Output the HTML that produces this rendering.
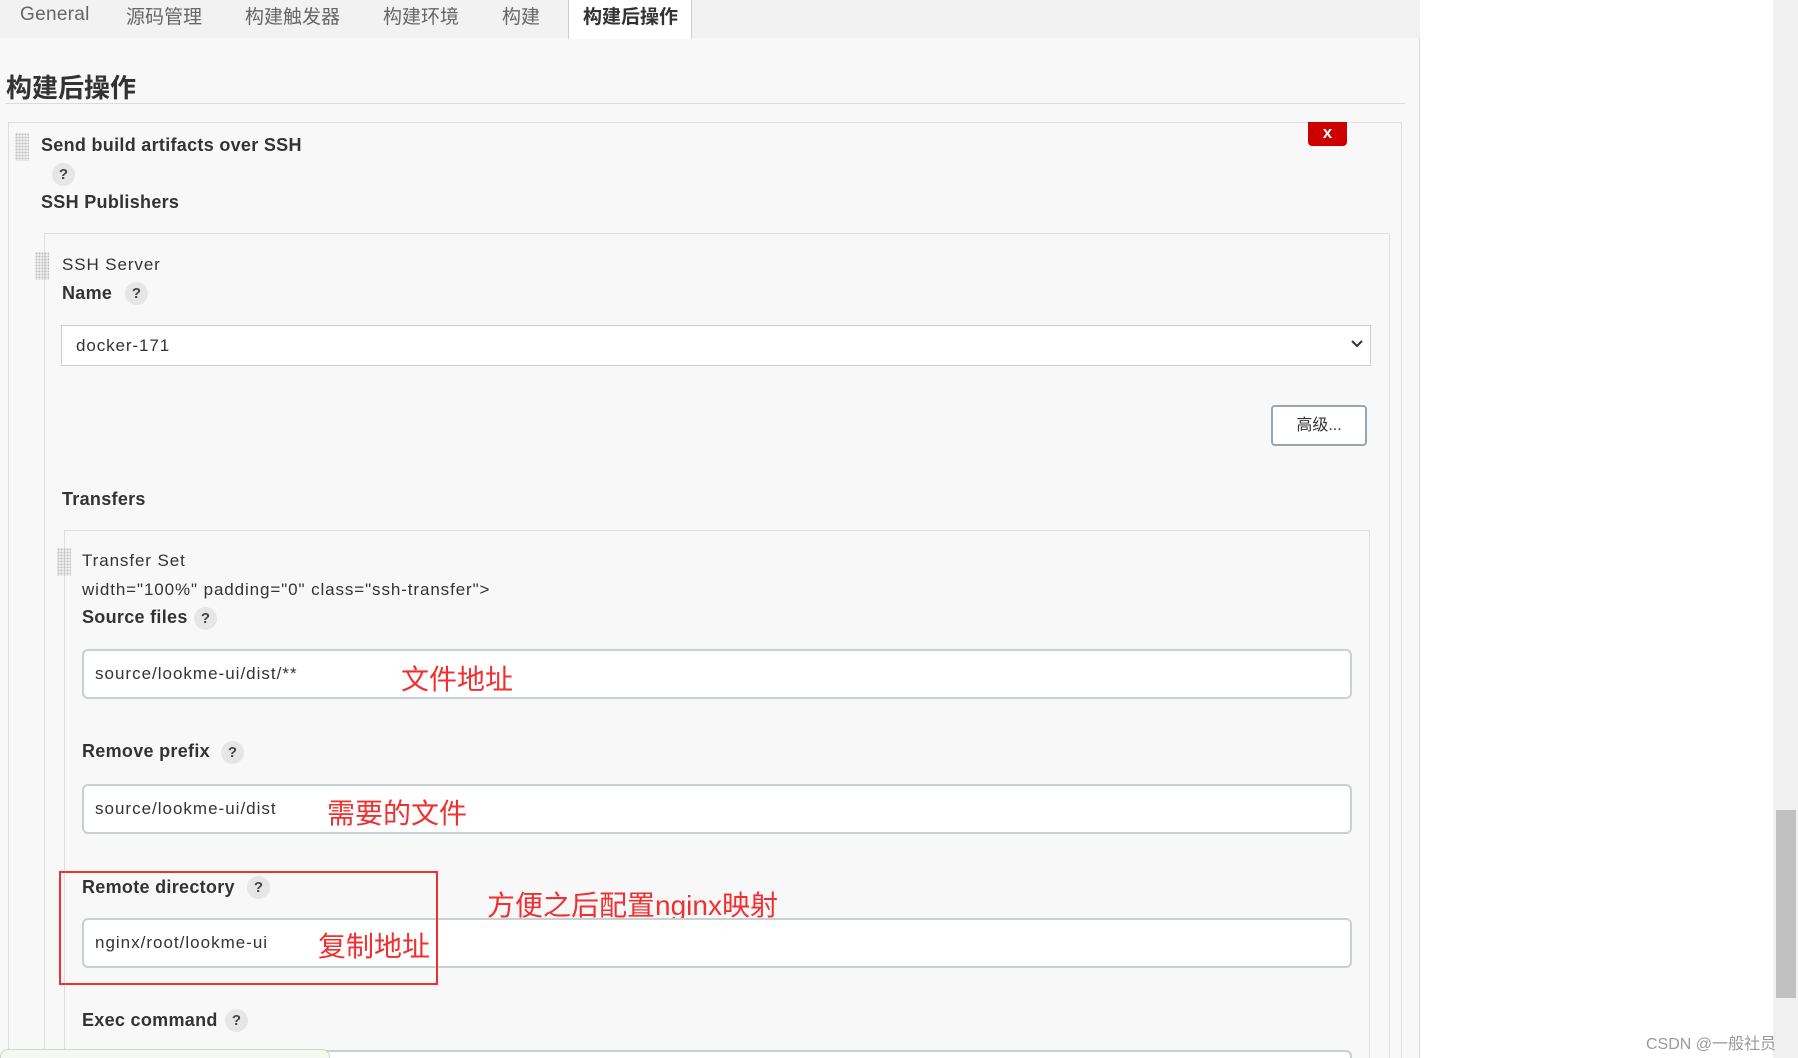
<!DOCTYPE html>
<html><head><meta charset="utf-8"><style>
*{margin:0;padding:0;box-sizing:border-box}
html,body{width:1798px;height:1058px;overflow:hidden;background:#fff}
body{font-family:"Liberation Sans","Noto Sans CJK SC",sans-serif;color:#333}
#w{position:relative;width:1798px;height:1058px;overflow:hidden}
.a{position:absolute;white-space:nowrap}
.main{position:absolute;left:0;top:0;width:1420px;height:1058px;background:#f8f8f8;border-right:1px solid #d8dadc}
.tabs{position:absolute;left:0;top:0;width:1420px;height:38px;background:#f2f2f2}
.tab{position:absolute;top:2px;font-size:19px;color:#666}
.active{position:absolute;left:568px;top:0;width:124px;height:39px;background:#fff;border:1px solid #ccc;border-top:none;border-bottom:none}
.box{position:absolute;border:1px solid #dcdfe2;border-bottom:none}
.b{font-weight:bold;font-size:18px;color:#333;letter-spacing:0.3px}
.n{font-size:17px;color:#333;letter-spacing:0.9px}
.q{position:absolute;width:23px;height:23px;border-radius:50%;background:#e6e6e6;font-size:15px;font-weight:bold;text-align:center;line-height:23px;color:#444}
.grip{position:absolute;width:14px;height:28px;background-image:radial-gradient(circle,#bbb 1px,transparent 1.2px);background-size:3px 3px}
.inp{position:absolute;background:#fff;border:2px solid #c8d0d4;border-radius:6px;font-size:17px;padding-left:11px;letter-spacing:1px}
.red{position:absolute;color:#f03030;font-size:28px;white-space:nowrap}
</style></head><body><div id="w">
<div class="main"></div>
<div class="tabs"></div>
<div class="active"></div>
<div class="tab a" style="left:20px;top:4px;letter-spacing:0.3px">General</div>
<div class="tab a" style="left:126px">源码管理</div>
<div class="tab a" style="left:245px">构建触发器</div>
<div class="tab a" style="left:383px">构建环境</div>
<div class="tab a" style="left:502px">构建</div>
<div class="tab a" style="left:583px;color:#333;font-weight:bold">构建后操作</div>
<div class="a" style="left:6px;top:68px;font-size:26px;font-weight:bold;color:#333">构建后操作</div>
<div class="a" style="left:5px;top:103px;width:1400px;height:1px;background:#dcdcdc"></div>
<div class="box" style="left:8px;top:122px;width:1394px;height:936px"></div>
<div style="position:absolute;left:1308px;top:122px;width:39px;height:24px;background:#cc0000;border-radius:0 0 4px 4px;color:#fff;font-weight:bold;font-size:17px;text-align:center;line-height:22px">x</div>
<div class="grip" style="left:15px;top:133px"></div>
<div class="a b" style="left:41px;top:135px">Send build artifacts over SSH</div>
<div class="q" style="left:52px;top:163px">?</div>
<div class="a b" style="left:41px;top:192px">SSH Publishers</div>
<div class="box" style="left:44px;top:233px;width:1346px;height:825px"></div>
<div class="grip" style="left:35px;top:252px"></div>
<div class="a n" style="left:62px;top:255px">SSH Server</div>
<div class="a b" style="left:62px;top:283px">Name</div>
<div class="q" style="left:125px;top:282px">?</div>
<div style="position:absolute;left:61px;top:325px;width:1310px;height:41px;background:#fff;border:1px solid #c8ced3"></div>
<div class="a n" style="left:76px;top:336px">docker-171</div>
<svg class="a" style="left:1350px;top:339px" width="14" height="10"><path d="M2 2 L7 7 L12 2" stroke="#333" stroke-width="2" fill="none"/></svg>
<div style="position:absolute;left:1271px;top:405px;width:96px;height:41px;background:#fff;border:2px solid #9aa5ae;border-radius:4px;font-size:16px;text-align:center;line-height:37px;color:#333">高级...</div>
<div class="a b" style="left:62px;top:489px">Transfers</div>
<div class="box" style="left:64px;top:530px;width:1306px;height:528px"></div>
<div class="grip" style="left:57px;top:548px"></div>
<div class="a n" style="left:82px;top:551px">Transfer Set</div>
<div class="a n" style="left:82px;top:580px">width="100%" padding="0" class="ssh-transfer"&gt;</div>
<div class="a b" style="left:82px;top:607px">Source files</div>
<div class="q" style="left:194px;top:607px">?</div>
<div class="inp" style="left:82px;top:649px;width:1270px;height:50px;line-height:46px">source/lookme-ui/dist/**</div>
<div class="red" style="left:401px;top:658px">文件地址</div>
<div class="a b" style="left:82px;top:741px">Remove prefix</div>
<div class="q" style="left:221px;top:741px">?</div>
<div class="inp" style="left:82px;top:784px;width:1270px;height:50px;line-height:46px">source/lookme-ui/dist</div>
<div class="red" style="left:327px;top:792px">需要的文件</div>
<div class="a b" style="left:82px;top:877px">Remote directory</div>
<div class="q" style="left:247px;top:876px">?</div>
<div class="red" style="left:487px;top:884px">方便之后配置nginx映射</div>
<div class="inp" style="left:82px;top:918px;width:1270px;height:50px;line-height:46px">nginx/root/lookme-ui</div>
<div class="red" style="left:318px;top:925px">复制地址</div>
<div style="position:absolute;left:59px;top:871px;width:379px;height:114px;border:2px solid #f03030"></div>
<div class="a b" style="left:82px;top:1010px">Exec command</div>
<div class="q" style="left:225px;top:1009px">?</div>
<div class="inp" style="left:82px;top:1050px;width:1270px;height:40px"></div>
<div style="position:absolute;left:0;top:1049px;width:330px;height:20px;background:#f3f8f1;border:1px solid #c8dcc4;border-radius:8px"></div>
<div style="position:absolute;left:1773px;top:0;width:25px;height:1058px;background:#f0f0f0"></div>
<div style="position:absolute;left:1776px;top:810px;width:20px;height:188px;background:#c0c0c0"></div>
<div class="a" style="left:1646px;top:1030px;font-size:16px;color:#999">CSDN @一般社员</div>
</div></body></html>
